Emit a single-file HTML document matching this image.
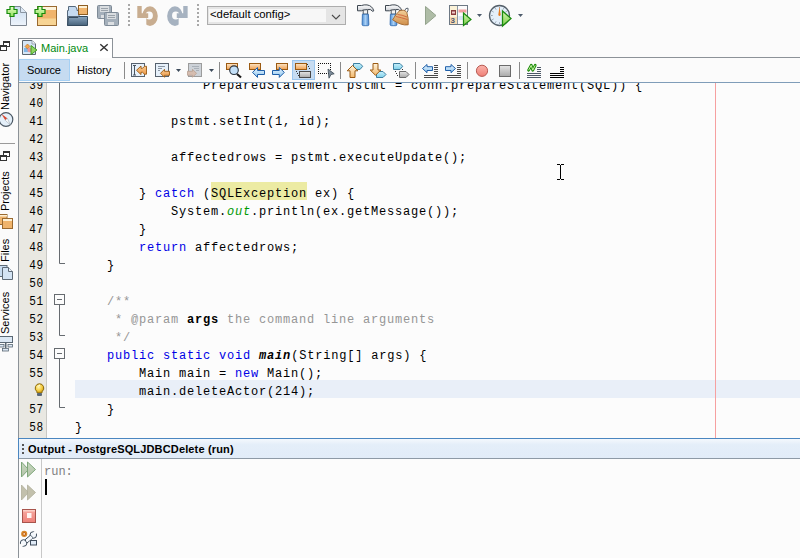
<!DOCTYPE html>
<html><head><meta charset="utf-8">
<style>
*{margin:0;padding:0;box-sizing:border-box}
html,body{width:800px;height:558px;overflow:hidden;background:#fbfbfb;font-family:"Liberation Sans",sans-serif;position:relative}
.a{position:absolute}
.sep{position:absolute;width:1px;background:#a9a9a9}
.dots{position:absolute;width:2px;background-image:linear-gradient(#9a9a9a 50%,transparent 50%);background-size:2px 5px}
.code{position:absolute;left:75px;font-family:"Liberation Mono",monospace;font-size:12px;letter-spacing:0.8px;line-height:18px;white-space:pre;color:#000}
.ln{position:absolute;left:19px;width:25px;transform:scaleX(0.92);transform-origin:23.5px 0;font-family:"Liberation Mono",monospace;font-size:12px;letter-spacing:0.8px;line-height:18px;white-space:pre;text-align:right;color:#000}
.kw{color:#0000e6}
.vt{font-size:11px;line-height:13px;color:#000;white-space:nowrap;transform-origin:0 0;transform:rotate(-90deg)}
.cm{color:#969696}
.arrow{position:absolute;width:0;height:0;border-left:3.5px solid transparent;border-right:3.5px solid transparent;border-top:4px solid #4d5b6b}
</style></head>
<body>
<!-- ===== top toolbar ===== -->
<div id="tb" class="a" style="left:0;top:0;width:800px;height:33px;background:#fbfbfb"></div>
<svg class="a" style="left:0;top:0" width="800" height="33" viewBox="0 0 800 33">
<defs>
<linearGradient id="gDoc" x1="0" y1="0" x2="0" y2="1"><stop offset="0" stop-color="#c9dcf0"/><stop offset="1" stop-color="#eef4fb"/></linearGradient>
<linearGradient id="gPlus" x1="0" y1="0" x2="0" y2="1"><stop offset="0" stop-color="#e8ffc8"/><stop offset="1" stop-color="#8ee05a"/></linearGradient>
<linearGradient id="gSlate" x1="0" y1="0" x2="0" y2="1"><stop offset="0" stop-color="#8aa6bf"/><stop offset="1" stop-color="#47627a"/></linearGradient>
<linearGradient id="gHandle" x1="0" y1="0" x2="1" y2="0"><stop offset="0" stop-color="#4e8fd6"/><stop offset=".5" stop-color="#a9d0f5"/><stop offset="1" stop-color="#4a86cc"/></linearGradient>
<linearGradient id="gHead" x1="0" y1="0" x2="0" y2="1"><stop offset="0" stop-color="#ffffff"/><stop offset="1" stop-color="#c8ccd2"/></linearGradient>
<linearGradient id="gPlay" x1="0" y1="0" x2="0" y2="1"><stop offset="0" stop-color="#d4f5b0"/><stop offset="1" stop-color="#7fcf4a"/></linearGradient>
<linearGradient id="gBroom" x1="0" y1="0" x2="0" y2="1"><stop offset="0" stop-color="#f3cf9a"/><stop offset="1" stop-color="#d08f4a"/></linearGradient>
</defs>
<!-- new file -->
<path d="M10.5 6.5 H20.5 L26.5 12.5 V25.5 H10.5 Z" fill="url(#gDoc)" stroke="#7d8691" stroke-width="1"/>
<path d="M20.5 6.5 V12.5 H26.5" fill="#dde8f4" stroke="#8b96a2" stroke-width="1"/>
<path d="M10 6.5 h4 v3 h3 v4 h-3 v3 h-4 v-3 h-3 v-4 h3 z" fill="url(#gPlus)" stroke="#178a0c" stroke-width="1.2" transform="translate(0,0)"/>
<!-- new project -->
<rect x="37.5" y="6.5" width="19" height="19" fill="#f0b46c" stroke="#9a6a30" stroke-width="1"/>
<rect x="38" y="7" width="18" height="3" fill="#fdf3dc"/>
<rect x="38" y="18.5" width="18" height="6.5" fill="#f7d494"/>
<path d="M38 6.5 h4 v3 h3 v4 h-3 v3 h-4 v-3 h-3 v-4 h3 z" fill="url(#gPlus)" stroke="#178a0c" stroke-width="1.2"/>
<!-- open project -->
<path d="M67.5 25.5 V10.5 H68.5 V6.5 H75.5 L77 9 V10.5 H79 V16.5 H67.5" fill="#c5daf0" stroke="#56697c" stroke-width="1"/>
<path d="M67.5 25.5 L68.5 17.5 H78 L79 16.5 H87.5 V25.5 Z" fill="url(#gSlate)" stroke="#344a5e" stroke-width="1"/>
<rect x="78.5" y="5.5" width="9" height="9" fill="#f0b46c" stroke="#8d5d22" stroke-width="1"/>
<rect x="79" y="6" width="8" height="2" fill="#fdf0d4"/>
<!-- save all (disabled) -->
<rect x="97.5" y="5.5" width="14" height="13" rx="1" fill="#a4afba" stroke="#7e8a96"/>
<rect x="100" y="6" width="9" height="6" fill="#d9dde0"/>
<rect x="101" y="8" width="7" height="1" fill="#9aa2aa"/><rect x="101" y="10" width="7" height="1" fill="#9aa2aa"/>
<rect x="101" y="15" width="6" height="3" fill="#dcdfe2"/>
<rect x="104.5" y="12.5" width="14" height="13" rx="1" fill="#a4afba" stroke="#7e8a96"/>
<rect x="107" y="13" width="9" height="6" fill="#d9dde0"/>
<rect x="108" y="15" width="7" height="1" fill="#9aa2aa"/><rect x="108" y="17" width="7" height="1" fill="#9aa2aa"/>
<rect x="108" y="22" width="6" height="3" fill="#dcdfe2"/>
<!-- separators -->
<g fill="#a8a8a8"><rect x="128" y="4" width="2" height="2"/><rect x="128" y="8" width="2" height="2"/><rect x="128" y="12" width="2" height="2"/><rect x="128" y="16" width="2" height="2"/><rect x="128" y="20" width="2" height="2"/><rect x="128" y="24" width="2" height="2"/><rect x="197" y="4" width="2" height="2"/><rect x="197" y="8" width="2" height="2"/><rect x="197" y="12" width="2" height="2"/><rect x="197" y="16" width="2" height="2"/><rect x="197" y="20" width="2" height="2"/><rect x="197" y="24" width="2" height="2"/></g>
<!-- undo -->
<g><path fill-rule="evenodd" fill="#c8ad90" d="M157.8 16.1 A7.8 9.8 0 1 0 142.2 16.1 A7.8 9.8 0 1 0 157.8 16.1 Z M152.9 15.5 A3.7 3.9 0 1 0 145.5 15.5 A3.7 3.9 0 1 0 152.9 15.5 Z"/>
<rect x="136" y="18" width="10.3" height="10" fill="#fbfbfb"/><path d="M141.7 4 L146.5 4 L141.7 9.8 Z" fill="#fbfbfb"/>
<path d="M137.3 6 H141.7 V13.2 H148.2 V18 H137.3 Z" fill="#c8ad90"/></g>
<!-- redo -->
<g transform="translate(324.95,0) scale(-1,1)"><path fill-rule="evenodd" fill="#a6b2c0" d="M157.8 16.1 A7.8 9.8 0 1 0 142.2 16.1 A7.8 9.8 0 1 0 157.8 16.1 Z M152.9 15.5 A3.7 3.9 0 1 0 145.5 15.5 A3.7 3.9 0 1 0 152.9 15.5 Z"/>
<rect x="136" y="18" width="10.3" height="10" fill="#fbfbfb"/><path d="M141.7 4 L146.5 4 L141.7 9.8 Z" fill="#fbfbfb"/>
<path d="M137.3 6 H141.7 V13.2 H148.2 V18 H137.3 Z" fill="#a6b2c0"/></g>
<!-- combo -->
<rect x="207.5" y="6.5" width="138" height="18" fill="#e5e5e5" stroke="#adadad"/>
<rect x="209" y="9" width="117" height="13" fill="#f7f7f7"/>
<path d="M332 15 L336 19 L340 15" fill="none" stroke="#4a4a4a" stroke-width="1.1"/>
<!-- hammer -->
<g transform="translate(0,0)">
<path d="M363.2 10 V14.2 H367.6 V10" fill="#f2f2f2" stroke="#3d4650" stroke-width=".9"/>
<path d="M357.5 5.5 H361.5 Q364 4.6 367 4.9 Q372.2 5.6 373.8 10.8 L372.8 11.4 Q370.5 8.6 367.6 9.6 L363.2 10 L361.5 10.8 H357.5 Z" fill="url(#gHead)" stroke="#3d4650" stroke-width="1"/>
<path d="M362.4 14.2 H368.4 L368.9 24.4 Q368.9 25.7 367.5 25.7 H363.6 Q362.1 25.7 362.1 24.4 Z" fill="url(#gHandle)" stroke="#2a64ab" stroke-width=".8"/>
</g>
<!-- clean build -->
<g transform="translate(28,0)">
<path d="M363.2 10 V14.2 H367.6 V10" fill="#f2f2f2" stroke="#3d4650" stroke-width=".9"/>
<path d="M357.5 5.5 H361.5 Q364 4.6 367 4.9 Q372.2 5.6 373.8 10.8 L372.8 11.4 Q370.5 8.6 367.6 9.6 L363.2 10 L361.5 10.8 H357.5 Z" fill="url(#gHead)" stroke="#3d4650" stroke-width="1"/>
<path d="M362.4 14.2 H368.4 L368.9 24.4 Q368.9 25.7 367.5 25.7 H363.6 Q362.1 25.7 362.1 24.4 Z" fill="url(#gHandle)" stroke="#2a64ab" stroke-width=".8"/>
</g>
<path d="M404.5 11 Q405.5 7.5 408 8.2 Q408.6 10 407 12.5" fill="none" stroke="#5a6470" stroke-width="1"/>
<path d="M399.5 10.8 Q404.5 9 406.8 12.5 Q408.8 18 408.2 24.8 Q401.5 26 392.6 19.8 Q395.5 14.5 399.5 10.8 Z" fill="url(#gBroom)" stroke="#a0642a" stroke-width=".9"/>
<path d="M397.5 14.5 Q402 14.8 407 17 M396 16.5 Q401 17.5 407.5 19.5" stroke="#d0603a" stroke-width=".9" fill="none"/>
<!-- run disabled -->
<path d="M425.5 6.5 L436 15.5 L425.5 24.5 Z" fill="#aebca6" stroke="#94a38d" stroke-width="1"/>
<!-- debug/test file -->
<rect x="449.5" y="5.5" width="18" height="19" fill="#fbfbfb" stroke="#6d7884"/>
<rect x="450" y="6" width="7" height="11" fill="#fbf2d8"/>
<rect x="450" y="17" width="7" height="7" fill="#f8dcb4"/>
<line x1="457.5" y1="6" x2="457.5" y2="24" stroke="#8a96a2"/>
<rect x="451" y="10" width="5" height="5" fill="#8a3a3a"/>
<rect x="452" y="11.5" width="3" height="2" fill="#f0c8c8"/>
<text x="450.6" y="23" font-family="Liberation Sans" font-size="8" font-weight="bold" fill="#4d5a70">3</text>
<rect x="458.5" y="9.5" width="8" height="3" fill="#f4a0a0"/>
<rect x="458.5" y="16" width="5" height="4" fill="#d6e4f4"/>
<path d="M463.5 13 L471 19.5 L463.5 25.5 Z" fill="url(#gPlay)" stroke="#1b8a10" stroke-width="1.2"/>
<path d="M477 14 h5 l-2.5 3 z" fill="#4d5b6b"/>
<!-- profile -->
<circle cx="499.5" cy="15.5" r="10" fill="#e4effa" stroke="#55606a" stroke-width="1.3"/><path d="M499.50 7.30 L499.50 8.50 M503.60 8.40 L503.00 9.44 M506.60 11.40 L505.56 12.00 M507.70 15.50 L506.50 15.50 M506.60 19.60 L505.56 19.00 M503.60 22.60 L503.00 21.56 M499.50 23.70 L499.50 22.50 M495.40 22.60 L496.00 21.56 M492.40 19.60 L493.44 19.00 M491.30 15.50 L492.50 15.50 M492.40 11.40 L493.44 12.00 M495.40 8.40 L496.00 9.44" stroke="#7a8896" stroke-width="1"/>
<path d="M499.5 6.5 L500.7 15 Q499.5 17 498.3 15 Z" fill="#e67a1e"/>
<path d="M502.5 11 L511 18.5 L502.5 26 Z" fill="url(#gPlay)" stroke="#1b8a10" stroke-width="1.3"/>
<path d="M518 14 h5 l-2.5 3 z" fill="#4d5b6b"/>
</svg>
<div class="a" style="left:210px;top:7px;font-size:11.3px;line-height:14px;color:#000">&lt;default config&gt;</div>


<!-- ===== left sidebar ===== -->
<div class="a" style="left:0;top:33px;width:18px;height:525px;background:#fbfbfb"></div>
<div class="a" style="left:18px;top:38px;width:1px;height:400px;background:#8c9298"></div>
<svg class="a" style="left:0;top:36px" width="18" height="324" viewBox="0 36 18 324">
<!-- restore icon navigator -->
<rect x="3.5" y="41.5" width="6" height="5" fill="#fff" stroke="#333"/><rect x="3" y="41" width="7" height="2" fill="#333"/>
<rect x="0.5" y="45.5" width="6" height="5" fill="#fff" stroke="#333"/><rect x="0" y="45" width="7" height="2" fill="#333"/>
<!-- compass -->
<circle cx="6" cy="119.5" r="6.8" fill="#e4eff9" stroke="#4b5864" stroke-width="1.2"/>
<path d="M1.5 114 L7.3 118.3 L5.3 120.3 Z" fill="#d9462e"/>
<path d="M10.5 125 L7.3 118.3 L5.3 120.3 Z" fill="#ffffff" stroke="#8a96a0" stroke-width=".5"/>
<!-- separator -->
<rect x="0" y="143" width="15" height="1" fill="#9a9a9a"/>
<!-- restore icon projects -->
<rect x="3.5" y="151.5" width="6" height="5" fill="#fff" stroke="#333"/><rect x="3" y="151" width="7" height="2" fill="#333"/>
<rect x="0.5" y="155.5" width="6" height="5" fill="#fff" stroke="#333"/><rect x="0" y="155" width="7" height="2" fill="#333"/>
<!-- projects icon -->
<rect x="-0.5" y="214.5" width="7.5" height="10" fill="#f0b46c" stroke="#9a6a30"/>
<rect x="0" y="215" width="7" height="1.5" fill="#fdf0d4"/>
<rect x="2.5" y="218.5" width="10" height="10" fill="#f0b46c" stroke="#9a6a30"/>
<rect x="3" y="219" width="9" height="2" fill="#fdf0d4"/>
<!-- files icon -->
<rect x="-0.5" y="265.5" width="7.5" height="11" fill="#c8dcf0" stroke="#5e6a76"/>
<path d="M2.5 267.5 H8.5 L12.5 271.5 V279.5 H2.5 Z" fill="#d4e4f4" stroke="#5e6a76"/>
<path d="M8.5 267.5 V271.5 H12.5" fill="#eef4fb" stroke="#5e6a76"/>
<!-- services icon -->
<rect x="-0.5" y="336.5" width="13" height="6" fill="#dce8f4" stroke="#5a6874"/>
<rect x="5" y="343" width="1.5" height="5" fill="#5a6874"/>
<rect x="-0.5" y="344.5" width="4.5" height="2.5" fill="#dce8f4" stroke="#5a6874" stroke-width=".8"/>
<rect x="8" y="344.5" width="4.5" height="2.5" fill="#dce8f4" stroke="#5a6874" stroke-width=".8"/>
<rect x="2.5" y="348.5" width="6" height="2.5" fill="#dce8f4" stroke="#5a6874" stroke-width=".8"/>
</svg>
<div class="a vt" style="left:-1px;top:109.5px">Navigator</div>
<div class="a vt" style="left:-1px;top:210.5px">Projects</div>
<div class="a vt" style="left:-1px;top:262px">Files</div>
<div class="a vt" style="left:-1px;top:334px">Services</div>


<!-- ===== editor tab ===== -->
<div class="a" style="left:18px;top:38px;width:95px;height:20px;border:1px solid #8c9298;border-bottom:none;background:#fff"></div>
<div class="a" style="left:112px;top:57px;width:688px;height:1px;background:#8c9298"></div>
<div class="a" style="left:41px;top:41px;font-size:11px;line-height:14px;color:#008a10">Main.java</div>
<svg class="a" style="left:18px;top:38px" width="95" height="20" viewBox="18 38 95 20">
<!-- java file icon -->
<path d="M22.5 40.5 H32 L35.5 44 V54.5 H22.5 Z" fill="#d6e6f6" stroke="#5c6670"/>
<path d="M32 40.5 V44 H35.5" fill="#eef4fb" stroke="#8a96a2" stroke-width=".8"/>
<rect x="24" y="48" width="4" height="4" fill="#7fb8e8"/>
<path d="M27.5 44 L30 46.5 L27.5 49 L25 46.5 Z" fill="#f2a64a" stroke="#b5651d" stroke-width=".6"/>
<circle cx="29.5" cy="50" r="2.2" fill="#e9989a"/>
<path d="M31 45.5 L37 50 L31 54.5 Z" fill="#8fd460" stroke="#3b9a1c" stroke-width=".9"/>
<!-- close x -->
<path d="M100.3 44.2 L107.7 50.8 M107.7 44.2 L100.3 50.8" stroke="#333" stroke-width="1.4"/>
</svg>


<!-- ===== editor toolbar ===== -->
<div class="a" style="left:19px;top:58px;width:781px;height:25px;background:#fbfbfb"></div>
<div class="a" style="left:19px;top:59px;width:51px;height:22px;background:#c6dbf1;border:1px solid #a6d0f4"></div>
<div class="a" style="left:27px;top:63px;font-size:11px;letter-spacing:-0.2px;line-height:14px;color:#000">Source</div>
<div class="a" style="left:77px;top:63px;font-size:11px;line-height:14px;color:#000">History</div>
<svg class="a" style="left:0;top:56px" width="800" height="26" viewBox="0 56 800 26">
<defs>
<linearGradient id="gOr" x1="0" y1="0" x2="0" y2="1"><stop offset="0" stop-color="#fde6c8"/><stop offset="1" stop-color="#f0a050"/></linearGradient>
<linearGradient id="gOr2" x1="0" y1="0" x2="0" y2="1"><stop offset="0" stop-color="#f7c890"/><stop offset="1" stop-color="#ee9a48"/></linearGradient>
<linearGradient id="gBl" x1="0" y1="0" x2="0" y2="1"><stop offset="0" stop-color="#eaf6ff"/><stop offset="1" stop-color="#8cc4ee"/></linearGradient>
<linearGradient id="gTag" x1="0" y1="0" x2="0" y2="1"><stop offset="0" stop-color="#c8f0fb"/><stop offset="1" stop-color="#7fd0ea"/></linearGradient>
<linearGradient id="gGr" x1="0" y1="0" x2="0" y2="1"><stop offset="0" stop-color="#e6e6e6"/><stop offset="1" stop-color="#a8a8a8"/></linearGradient>
<linearGradient id="gRec" x1="0" y1="0" x2="0" y2="1"><stop offset="0" stop-color="#fbb4ac"/><stop offset="1" stop-color="#ef7f76"/></linearGradient>
<linearGradient id="gUp" x1="0" y1="0" x2="0" y2="1"><stop offset="0" stop-color="#fff4dc"/><stop offset="1" stop-color="#f2b86c"/></linearGradient>
</defs>
<!-- separator after History -->
<rect x="124" y="62" width="1" height="17" fill="#8a8a8a"/>
<rect x="219" y="62" width="1" height="17" fill="#8a8a8a"/>
<rect x="340" y="62" width="1" height="17" fill="#8a8a8a"/>
<rect x="415" y="62" width="1" height="17" fill="#8a8a8a"/>
<rect x="467" y="62" width="1" height="17" fill="#8a8a8a"/>
<rect x="519" y="62" width="1" height="17" fill="#8a8a8a"/>
<!-- last edit -->
<rect x="131.5" y="63.5" width="13" height="13" fill="#e6f0fa" stroke="#56616e"/>
<path d="M133 65.5 h3 M134.5 65.5 v9.5 M133 75 h3" stroke="#4a5560" stroke-width="1" fill="none"/>
<path d="M136.5 70.3 L141 66 V68.3 H142.5 L144.5 66.3 H146.5 V74.2 H144.5 L142.5 72.3 H141 V74.6 Z" fill="url(#gOr2)" stroke="#9b5a12" stroke-width=".9"/>
<!-- back -->
<rect x="155.5" y="63.5" width="13" height="13" fill="#e6f0fa" stroke="#56616e"/>
<path d="M158 66.5 h7 M158 68.5 h4 M158 70.5 h2" stroke="#8a96a4" stroke-width="1"/>
<path d="M160.5 73.3 L164.5 69.3 V71.3 H169.5 V75.3 H164.5 V77.3 Z" fill="url(#gOr2)" stroke="#9b5a12" stroke-width=".9"/>
<path d="M176 69 h5 l-2.5 3 z" fill="#3d4b5b"/>
<!-- forward disabled -->
<rect x="188.5" y="63.5" width="13" height="13" fill="#cdd2d8" stroke="#9c9c9c"/>
<path d="M192 66.5 h7 M194 68.5 h5 M196 70.5 h3" stroke="#a9b0b8" stroke-width="1"/>
<path d="M196.5 73.3 L192.5 69.3 V71.3 H187.5 V75.3 H192.5 V77.3 Z" fill="#d6bdb0" stroke="#b8a090" stroke-width=".8"/>
<path d="M209 69 h5 l-2.5 3 z" fill="#3d4b5b"/>
<!-- find -->
<rect x="226.5" y="63.5" width="11" height="6" fill="url(#gOr)" stroke="#9b5a12"/>
<line x1="237" y1="74" x2="241" y2="77.5" stroke="#1a1a1a" stroke-width="2.2"/>
<circle cx="234" cy="70.2" r="4.3" fill="#c4e0f8" stroke="#2a3440" stroke-width="1.1"/>
<!-- prev occurrence -->
<rect x="249.5" y="63.5" width="11" height="6" fill="url(#gOr)" stroke="#9b5a12"/>
<path d="M252.5 72.4 L257.5 67.5 V70.5 H264.5 V74.5 H257.5 V77.4 Z" fill="url(#gBl)" stroke="#1e5ea8" stroke-width="1"/>
<!-- next occurrence -->
<rect x="276.5" y="63.5" width="11" height="6" fill="url(#gOr)" stroke="#9b5a12"/>
<path d="M284.3 72.4 L279.3 67.5 V70.5 H272.5 V74.5 H279.3 V77.4 Z" fill="url(#gBl)" stroke="#1e5ea8" stroke-width="1"/>
<!-- toggle highlight (pressed) -->
<rect x="292.5" y="60.5" width="22" height="19" fill="#c7dcf2" stroke="#9cc6ee"/>
<rect x="295.5" y="63.5" width="11" height="6" fill="url(#gOr)" stroke="#9b5a12"/>
<rect x="299.5" y="71.5" width="11" height="6" fill="url(#gGr)" stroke="#4a4a4a"/>
<g fill="#333"><rect x="307" y="64" width="1" height="1"/><rect x="308" y="66" width="1" height="1"/><rect x="309" y="68" width="1" height="1"/><rect x="296" y="71" width="1" height="1"/><rect x="297" y="73" width="1" height="1"/><rect x="298" y="75" width="1" height="1"/></g>
<!-- rect select -->
<g fill="#111"><rect x="318" y="63" width="1" height="1"/><rect x="318" y="73" width="1" height="1"/><rect x="320" y="63" width="1" height="1"/><rect x="320" y="73" width="1" height="1"/><rect x="322" y="63" width="1" height="1"/><rect x="322" y="73" width="1" height="1"/><rect x="324" y="63" width="1" height="1"/><rect x="324" y="73" width="1" height="1"/><rect x="326" y="63" width="1" height="1"/><rect x="326" y="73" width="1" height="1"/><rect x="328" y="63" width="1" height="1"/><rect x="328" y="73" width="1" height="1"/><rect x="330" y="63" width="1" height="1"/><rect x="330" y="73" width="1" height="1"/><rect x="318" y="65" width="1" height="1"/><rect x="330" y="65" width="1" height="1"/><rect x="318" y="67" width="1" height="1"/><rect x="330" y="67" width="1" height="1"/><rect x="318" y="69" width="1" height="1"/><rect x="330" y="69" width="1" height="1"/><rect x="318" y="71" width="1" height="1"/><rect x="330" y="71" width="1" height="1"/></g>
<path d="M328 69 L334.2 73.8 L331 74.5 L329 78.2 Z" fill="#7d8c9a" stroke="#3e4a56" stroke-width=".8"/>
<!-- prev bookmark -->
<path d="M353.5 63.5 H360 L362.7 66.3 L360 69.5 H353.5 Z" fill="url(#gTag)" stroke="#3d7fa0"/>
<path d="M352.5 65.5 L357.8 70.8 H355 V77.5 H350 V70.8 H347.2 Z" fill="url(#gUp)" stroke="#9b5a12" stroke-width="1"/>
<!-- next bookmark -->
<path d="M376.5 71.5 H383 L386 74.5 L383 77.5 H376.5 Z" fill="url(#gTag)" stroke="#3d7fa0"/>
<path d="M375.5 75.3 L380.8 70 H378 V63.5 H373 V70 H370.2 Z" fill="url(#gUp)" stroke="#9b5a12" stroke-width="1"/>
<!-- toggle bookmark -->
<path d="M393.5 63.5 H400 L402.7 66.3 L400 69.5 H393.5 Z" fill="url(#gTag)" stroke="#3d7fa0"/>
<path d="M399.5 71.5 H406 L409 74.5 L406 77.5 H399.5 Z" fill="url(#gGr)" stroke="#6a6a6a"/>
<g fill="#333"><rect x="395" y="71" width="1" height="1"/><rect x="396" y="73" width="1" height="1"/><rect x="397" y="75" width="1" height="1"/><rect x="402" y="69" width="1" height="1"/></g>
<!-- shift left -->
<path d="M422.5 68.5 L427 64.5 V66.7 H432.5 V70.5 H427 V72.7 Z" fill="url(#gBl)" stroke="#1e5ea8" stroke-width="1"/>
<g fill="#4a4a4a"><rect x="434" y="65" width="4" height="1"/><rect x="434" y="67" width="4" height="1"/><rect x="434" y="69" width="4" height="1"/><rect x="434" y="71" width="4" height="1"/><rect x="434" y="73" width="4" height="1"/><rect x="424" y="75" width="14" height="1"/><rect x="424" y="77" width="14" height="1"/></g>
<!-- shift right -->
<path d="M455.5 68.5 L451 64.5 V66.7 H445.5 V70.5 H451 V72.7 Z" fill="url(#gBl)" stroke="#1e5ea8" stroke-width="1"/>
<g fill="#4a4a4a"><rect x="457" y="65" width="4" height="1"/><rect x="457" y="67" width="4" height="1"/><rect x="457" y="69" width="4" height="1"/><rect x="457" y="71" width="4" height="1"/><rect x="457" y="73" width="4" height="1"/><rect x="447" y="75" width="14" height="1"/><rect x="447" y="77" width="14" height="1"/></g>
<!-- record -->
<circle cx="482" cy="70.8" r="5.6" fill="url(#gRec)" stroke="#b85a52" stroke-width="1"/>
<!-- stop -->
<rect x="499.5" y="65.5" width="11" height="11" fill="url(#gGr)" stroke="#6b6b6b"/>
<!-- comment -->
<path d="M528.6 70.2 L531.2 65.3 L532.8 70.2 L535.2 65.3" fill="none" stroke="#1c8a0a" stroke-width="2.8" stroke-linejoin="round" stroke-linecap="round"/><path d="M528.6 70.2 L531.2 65.3 L532.8 70.2 L535.2 65.3" fill="none" stroke="#c4f4a0" stroke-width="1" stroke-linejoin="round"/>
<g fill="#4c5866"><rect x="537" y="67" width="4" height="1"/><rect x="537" y="69" width="4" height="1"/><rect x="537" y="71" width="4" height="1"/><rect x="527" y="73" width="14" height="1"/><rect x="527" y="75" width="14" height="1"/><rect x="527" y="77" width="14" height="1"/></g>
<!-- uncomment -->
<g fill="#000"><rect x="560" y="67" width="4" height="1"/><rect x="560" y="69" width="4" height="1"/><rect x="560" y="71" width="4" height="1"/><rect x="550" y="73" width="14" height="1"/><rect x="550" y="75" width="14" height="1"/><rect x="550" y="77" width="14" height="1"/></g>
</svg>
<div class="a" style="left:19px;top:82px;width:781px;height:1px;background:#7f9db9"></div>

<!-- ===== editor ===== -->
<div class="a" style="left:19px;top:83px;width:781px;height:355px;background:#fcfcfc;overflow:hidden">
</div>
<div class="a" style="left:19px;top:83px;width:27px;height:355px;background:#e9e8e2"></div>
<div class="a" style="left:46px;top:83px;width:1px;height:355px;background:#c8c8c4"></div>
<div class="a" style="left:75px;top:380px;width:725px;height:18px;background:#e9eff8"></div>
<div class="a" style="left:715px;top:83px;width:1px;height:355px;background:#f6a0a0"></div>
<div class="a" style="left:211px;top:182px;width:96px;height:18px;background:#eceba3"></div>

<svg class="a" style="left:47px;top:83px" width="28" height="355" viewBox="47 83 28 355">
<g stroke="#666b70" stroke-width="1" fill="none">
<path d="M59.5 83 V263.5 H65"/>
<rect x="54.5" y="294.5" width="10" height="10" fill="#fcfcfc"/>
<path d="M57 299.5 H62"/>
<path d="M59.5 305 V335.5 H65"/>
<rect x="54.5" y="348.5" width="10" height="10" fill="#fcfcfc"/>
<path d="M57 353.5 H62"/>
<path d="M59.5 359 V407.5 H65"/>
</g>
</svg>
<svg class="a" style="left:33px;top:382px" width="13" height="15" viewBox="33 382 13 15">
<defs><radialGradient id="gBulb" cx=".4" cy=".35" r=".7"><stop offset="0" stop-color="#fff6b0"/><stop offset=".6" stop-color="#f4c93a"/><stop offset="1" stop-color="#b88a10"/></radialGradient></defs>
<path d="M39.5 383.7 A4.4 4.4 0 0 1 42.3 391.4 L41.8 393 H37.2 L36.7 391.4 A4.4 4.4 0 0 1 39.5 383.7 Z" fill="url(#gBulb)" stroke="#8c6a0a" stroke-width="1"/><path d="M38 386.5 Q38.5 385.3 40 385.2" stroke="#fffbe0" stroke-width="1" fill="none"/>
<rect x="37" y="393" width="5" height="3" rx="1" fill="#5a6878"/>
</svg>
<div class="a" style="left:0;top:83px;width:800px;height:355px;overflow:hidden">
<div class="ln" style="top:-6px">39
40
41
42
43
44
45
46
47
48
49
50
51
52
53
54
55

57
58</div>
<div class="code" style="top:-6px;left:75px">                PreparedStatement pstmt = conn.prepareStatement(SQL)) {

            pstmt.setInt(1, id);

            affectedrows = pstmt.executeUpdate();

        } <span class="kw">catch</span> (SQLException ex) {
            System.<i style="color:#009900">out</i>.println(ex.getMessage());
        }
        <span class="kw">return</span> affectedrows;
    }

    <span class="cm">/**</span>
<span class="cm">     * @param </span><b>args</b><span class="cm"> the command line arguments</span>
<span class="cm">     */</span>
    <span class="kw">public</span> <span class="kw">static</span> <span class="kw">void</span> <b><i>main</i></b>(String[] args) {
        Main main = <span class="kw">new</span> Main();
        main.deleteActor(214);
    }
}</div>
</div>

<svg class="a" style="left:555px;top:162px" width="12" height="20" viewBox="555 162 12 20">
<g fill="#000"><rect x="557" y="164" width="3" height="1"/><rect x="561" y="164" width="3" height="1"/><rect x="560" y="165" width="1" height="14"/><rect x="557" y="179" width="3" height="1"/><rect x="561" y="179" width="3" height="1"/></g>
</svg>
<!-- ===== output ===== -->
<div class="a" style="left:18px;top:438px;width:782px;height:1px;background:#4a86c0"></div>
<div class="a" style="left:18px;top:439px;width:782px;height:19px;background:linear-gradient(#f4f8fd,#e4eef9 30%,#e2ecf8)"></div>
<div class="a" style="left:18px;top:458px;width:782px;height:1px;background:#8e9aa6"></div>
<div class="a" style="left:18px;top:438px;width:1px;height:21px;background:#4a86c0"></div><div class="a" style="left:18px;top:459px;width:1px;height:99px;background:#8c9298"></div>
<div class="a" style="left:28px;top:442px;font-size:11px;letter-spacing:0.15px;font-weight:bold;line-height:14px;color:#000">Output - PostgreSQLJDBCDelete (run)</div>
<div class="a" style="left:19px;top:459px;width:781px;height:99px;background:#fcfcfc"></div>
<div class="a" style="left:41px;top:459px;width:1px;height:99px;background:#c8c8c8"></div>
<div class="a" style="left:44px;top:465px;font-family:'Liberation Mono',monospace;font-size:12px;line-height:14px;color:#808080">run:</div>
<div class="a" style="left:45px;top:479px;width:2px;height:16px;background:#000"></div>
<svg class="a" style="left:18px;top:438px" width="30" height="120" viewBox="18 438 30 120">
<defs>
<linearGradient id="gRr" x1="0" y1="0" x2="0" y2="1"><stop offset="0" stop-color="#c6d8c0"/><stop offset="1" stop-color="#b4c2a8"/></linearGradient>
<linearGradient id="gStop" x1="0" y1="0" x2="0" y2="1"><stop offset="0" stop-color="#f7aaa2"/><stop offset="1" stop-color="#ee8078"/></linearGradient>
</defs>
<g fill="#555"><rect x="22" y="444" width="2" height="2"/><rect x="22" y="448" width="2" height="2"/><rect x="22" y="452" width="2" height="2"/></g>
<!-- rerun -->
<path d="M21.5 462 L28.5 469.5 L21.5 477 Z" fill="url(#gRr)" stroke="#7fa77a" stroke-width="1"/>
<path d="M27.5 462 L35.5 469.5 L27.5 477 Z" fill="url(#gRr)" stroke="#7fa77a" stroke-width="1"/>
<!-- rerun params disabled -->
<path d="M21.5 485 L28.5 492.5 L21.5 500 Z" fill="#c2c0ac" stroke="#b0ae9a" stroke-width=".8"/>
<path d="M27.5 485 L35.5 492.5 L27.5 500 Z" fill="#c2c0ac" stroke="#b0ae9a" stroke-width=".8"/>
<!-- stop -->
<rect x="22.5" y="509.5" width="13" height="13" fill="url(#gStop)" stroke="#a8544c"/>
<rect x="23" y="510" width="12" height="1.5" fill="#fbd0c8"/>
<rect x="27" y="513" width="4.5" height="5" fill="#fff4f2"/>
<!-- settings -->
<circle cx="24.2" cy="533.9" r="2.4" fill="#c25a10" stroke="#d88a2a" stroke-width="1.3"/>
<circle cx="24.2" cy="533.9" r=".9" fill="#f8e8c8"/>
<g stroke="#3f4d5c" stroke-width="1" fill="#f4f8fc">
<circle cx="33.3" cy="535" r="3.3"/>
<circle cx="23.6" cy="543" r="3.3"/>
<path d="M25 539.8 L30.5 535.2 L33 537.8 L27 543 Z"/>
<rect x="30.5" y="540.5" width="6" height="4.5" fill="#dfeaf6"/>
</g>
<path d="M26 540.5 L31 536.2 L32.6 538 L27 542.3 Z" fill="#f4f8fc"/>
<rect x="33.8" y="531" width="3" height="3" fill="#fbfbfb" transform="rotate(45 35.3 532.5)"/>
<rect x="20" y="543.6" width="3" height="3" fill="#fbfbfb" transform="rotate(45 21.5 545.1)"/>
</svg>


</body></html>
